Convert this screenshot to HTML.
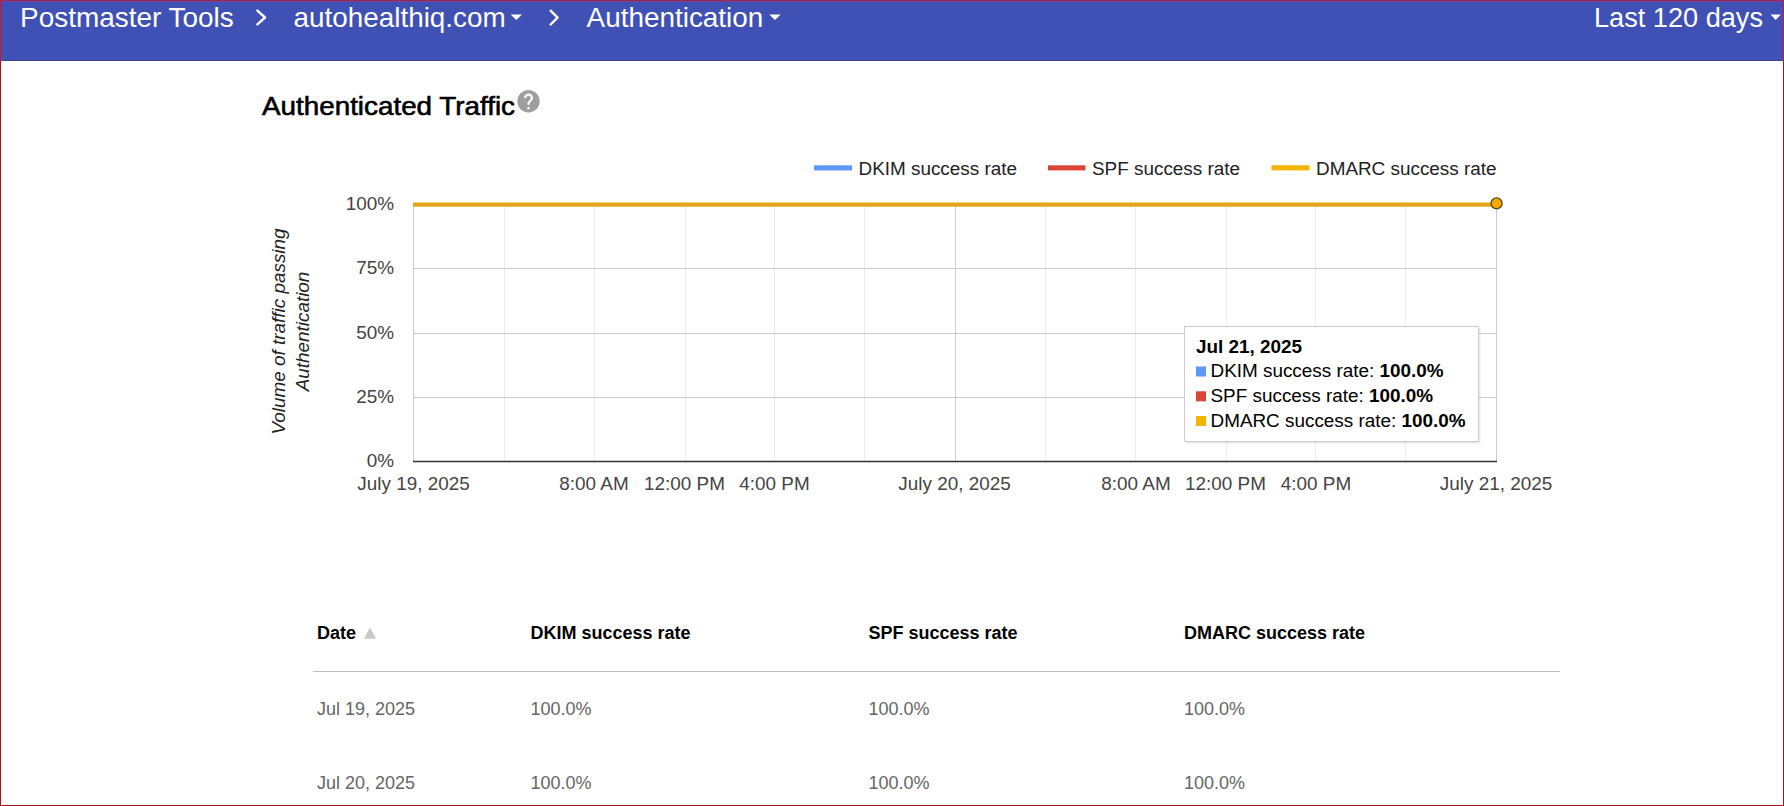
<!DOCTYPE html>
<html><head><meta charset="utf-8">
<style>
html,body{margin:0;padding:0;background:#fff;width:1784px;height:806px;overflow:hidden;}
body{position:relative;font-family:"Liberation Sans",sans-serif;}
svg{position:absolute;left:0;top:0;}
.frame{position:absolute;left:0;top:0;width:1784px;height:806px;box-sizing:border-box;border:1px solid #9e1419;pointer-events:none;}
</style></head>
<body>
<svg width="1784" height="806" viewBox="0 0 1784 806" font-family="Liberation Sans, sans-serif">
  <!-- header bar -->
  <rect x="0" y="0" width="1784" height="60" fill="#3f51b5"/>
  <rect x="0" y="60" width="1784" height="1" fill="#3b4494"/>
  <g fill="#fff">
    <text x="20" y="27" font-size="27.94">Postmaster Tools</text>
    <text x="293.5" y="27" font-size="27.86">autohealthiq.com</text>
    <text x="586.6" y="27" font-size="27.89">Authentication</text>
    <text x="1763" y="27" font-size="27.15" text-anchor="end">Last 120 days</text>
  </g>
  <g fill="none" stroke="#fff" stroke-width="2.4" stroke-linecap="round" stroke-linejoin="round">
    <path d="M257.4 10.6 L265 17.5 L257.4 24.4"/>
    <path d="M550.6 10.7 L557.6 17.6 L550.6 24.5"/>
  </g>
  <g fill="#fff">
    <path d="M510.6 14.6 L522 14.6 L516.3 19.9 Z"/>
    <path d="M769.3 14.5 L780.6 14.5 L775 19.9 Z"/>
    <path d="M1770.6 14.6 L1780.8 14.6 L1775.7 19.9 Z"/>
  </g>

  <!-- title -->
  <text x="262" y="114.8" font-size="26.6" fill="#000" stroke="#000" stroke-width="0.6" textLength="253" lengthAdjust="spacingAndGlyphs">Authenticated Traffic</text>
  <path transform="translate(515.06,87.86) scale(1.12)" fill="#9e9e9e" d="M12 2C6.48 2 2 6.48 2 12s4.48 10 10 10 10-4.48 10-10S17.52 2 12 2zm1 17h-2v-2h2v2zm2.07-7.75l-.9.92C13.45 12.9 13 13.5 13 15h-2v-.5c0-1.1.45-2.1 1.170-2.83l1.24-1.26c.37-.36.59-.86.59-1.41 0-1.1-.9-2-2-2s-2 .9-2 2H8c0-2.21 1.790-4 4-4s4 1.79 4 4c0 .88-.36 1.68-.93 2.250z"/>

  <!-- legend -->
  <g font-size="18.9" fill="#222">
    <rect x="814" y="165.3" width="38" height="5.1" fill="#5e97f6"/>
    <text x="858.5" y="174.8">DKIM success rate</text>
    <rect x="1048" y="165.3" width="37.5" height="5.1" fill="#db4437"/>
    <text x="1092" y="174.8">SPF success rate</text>
    <rect x="1271.5" y="165.3" width="38" height="5.1" fill="#f4b400"/>
    <text x="1316" y="174.8">DMARC success rate</text>
  </g>

  <!-- chart grid -->
  <g stroke="#ebebeb" stroke-width="1">
    <path d="M504.5 205V461 M594.5 205V461 M685.5 205V461 M774.5 205V461 M864.5 205V461 M1045.5 205V461 M1135.5 205V461 M1226.5 205V461 M1315.5 205V461 M1405.5 205V461"/>
  </g>
  <g stroke="#cccccc" stroke-width="1">
    <path d="M413.5 204V461 M955.5 205V461 M1496.5 205V461"/>
    <path d="M413 268.5H1497 M413 333.5H1497 M413 397.5H1497"/>
  </g>
  <path d="M413 461.5H1497" stroke="#333" stroke-width="1.5"/>
  <path d="M413 204.7H1497" stroke="#e5a61c" stroke-width="4.2"/>
  <circle cx="1496.6" cy="203.4" r="5.5" fill="#f4a800" stroke="#5a4316" stroke-width="1.3"/>

  <!-- y labels -->
  <g font-size="18.9" fill="#444" text-anchor="end">
    <text x="394" y="209.5">100%</text>
    <text x="394" y="274">75%</text>
    <text x="394" y="338.5">50%</text>
    <text x="394" y="403">25%</text>
    <text x="394" y="467.4">0%</text>
  </g>
  <!-- y title -->
  <g font-size="18.9" font-style="italic" fill="#222" text-anchor="middle" transform="translate(0,0)">
    <text transform="translate(285.2,331.5) rotate(-90)">Volume of traffic passing</text>
    <text transform="translate(308.5,331.5) rotate(-90)">Authentication</text>
  </g>
  <!-- x labels -->
  <g font-size="18.9" fill="#444" text-anchor="middle">
    <text x="413.5" y="489.5">July 19, 2025</text>
    <text x="594" y="489.5">8:00 AM</text>
    <text x="684.5" y="489.5">12:00 PM</text>
    <text x="774.5" y="489.5">4:00 PM</text>
    <text x="954.5" y="489.5">July 20, 2025</text>
    <text x="1136" y="489.5">8:00 AM</text>
    <text x="1225.5" y="489.5">12:00 PM</text>
    <text x="1316" y="489.5">4:00 PM</text>
    <text x="1496" y="489.5">July 21, 2025</text>
  </g>

  <!-- tooltip -->
  <rect x="1186.5" y="328.5" width="294" height="115" fill="#000" opacity="0.08"/>
  <rect x="1184.5" y="326.5" width="294" height="115" fill="#fff" stroke="#cccccc" stroke-width="1"/>
  <g font-size="18.9" fill="#000">
    <text x="1196" y="353.3" font-weight="bold">Jul 21, 2025</text>
    <rect x="1196" y="366.5" width="10" height="10" fill="#5e97f6"/>
    <text x="1210.5" y="377.4">DKIM success rate: <tspan font-weight="bold">100.0%</tspan></text>
    <rect x="1196" y="391.3" width="10" height="10" fill="#db4437"/>
    <text x="1210.5" y="402.3">SPF success rate: <tspan font-weight="bold">100.0%</tspan></text>
    <rect x="1196" y="416" width="10" height="10" fill="#f4b400"/>
    <text x="1210.5" y="427.3">DMARC success rate: <tspan font-weight="bold">100.0%</tspan></text>
  </g>

  <!-- table -->
  <g font-size="18" font-weight="bold" fill="#000">
    <text x="317" y="638.7">Date</text>
    <text x="530.5" y="638.7">DKIM success rate</text>
    <text x="868.5" y="638.7">SPF success rate</text>
    <text x="1184" y="638.7">DMARC success rate</text>
  </g>
  <path d="M364 638.7 L370 627.6 L376 638.7 Z" fill="#c8c8c8"/>
  <path d="M313 671.5H1560" stroke="#bdbdbd" stroke-width="1"/>
  <g font-size="18" fill="#666">
    <text x="317" y="715">Jul 19, 2025</text>
    <text x="530.5" y="715">100.0%</text>
    <text x="868.5" y="715">100.0%</text>
    <text x="1184" y="715">100.0%</text>
    <text x="317" y="788.6">Jul 20, 2025</text>
    <text x="530.5" y="788.6">100.0%</text>
    <text x="868.5" y="788.6">100.0%</text>
    <text x="1184" y="788.6">100.0%</text>
  </g>
</svg>
<div class="frame"></div>
<div style="position:absolute;left:0;top:0;width:1784px;height:1px;background:#9b2556"></div>
<div style="position:absolute;left:1px;top:1px;width:1782px;height:1px;background:#6f4595"></div>
<div style="position:absolute;left:0;top:0;width:1px;height:61px;background:#a02552"></div>
<div style="position:absolute;left:1px;top:1px;width:1px;height:60px;background:#7d3c88"></div>
<div style="position:absolute;right:0;top:0;width:1px;height:61px;background:#a02552"></div>
<div style="position:absolute;right:1px;top:1px;width:1px;height:60px;background:#7d3c88"></div>
</body></html>
